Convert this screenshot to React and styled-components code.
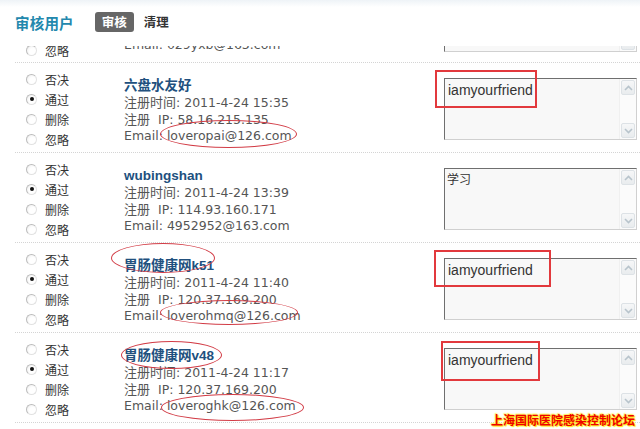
import React from 'react';
import styled, { createGlobalStyle } from 'styled-components';

const Global = createGlobalStyle`
  html, body {
    margin: 0;
    padding: 0;
    background: #fff;
    overflow: hidden;
  }
  body {
    font-family: "DejaVu Sans", "Noto Sans CJK SC", sans-serif;
  }
`;

// the list is scrolled: only the bottom of this entry is in view
const previous = { email: '029yxb@163.com' };

const users = [
  {
    name: '六盘水友好',
    time: '2011-4-24 15:35',
    ip: '58.16.215.135',
    email: 'loveropai@126.com',
    note: 'iamyourfriend',
    checked: 1,
    marks: {
      rect: { left: 420, top: 7, width: 102, height: 38 },
      ovals: [{ left: 145, top: 57, width: 137, height: 28 }],
    },
  },
  {
    name: 'wubingshan',
    time: '2011-4-24 13:39',
    ip: '114.93.160.171',
    email: '4952952@163.com',
    note: '学习',
    cjk: true,
    checked: 1,
  },
  {
    name: '胃肠健康网k51',
    time: '2011-4-24 11:40',
    ip: '120.37.169.200',
    email: 'loverohmq@126.com',
    note: 'iamyourfriend',
    checked: 1,
    marks: {
      rect: { left: 419, top: 7, width: 117, height: 37 },
      ovals: [
        { left: 96, top: 0, width: 104, height: 30 },
        { left: 145, top: 57, width: 138, height: 25 },
      ],
    },
  },
  {
    name: '胃肠健康网v48',
    time: '2011-4-24 11:17',
    ip: '120.37.169.200',
    email: 'loveroghk@126.com',
    note: 'iamyourfriend',
    checked: 1,
    marks: {
      rect: { left: 426, top: 8, width: 99, height: 40 },
      ovals: [
        { left: 106, top: 8, width: 101, height: 28 },
        { left: 146, top: 61, width: 143, height: 27 },
      ],
    },
  },
];

const actions = ['否决', '通过', '删除', '忽略'];

const Scroll = () => (
  <ScrollBar>
    <ScrollBtn>
      <svg width="9" height="6" viewBox="0 0 9 6">
        <path d="M1 5 L4.5 1.5 L8 5" fill="none" stroke="#b8c4cc" strokeWidth="1.6" />
      </svg>
    </ScrollBtn>
    <ScrollBtn>
      <svg width="9" height="6" viewBox="0 0 9 6">
        <path d="M1 1 L4.5 4.5 L8 1" fill="none" stroke="#b8c4cc" strokeWidth="1.6" />
      </svg>
    </ScrollBtn>
  </ScrollBar>
);

const App = () => (
  <Page>
    <Global />
    <Header>
      <Title>审核用户</Title>
      <Tab active>审核</Tab>
      <Tab>清理</Tab>
    </Header>
    <List>
      <Row tail>
        <Actions tail>
          <Choice>
            <Radio />
            忽略
          </Choice>
        </Actions>
        <Info tail>
          <Line>Email: {previous.email}</Line>
        </Info>
        <Memo tail>
          <MemoText />
          <Scroll />
        </Memo>
      </Row>
      {users.map((u, i) => (
        <Row key={i}>
          <Actions>
            {actions.map((a, j) => (
              <Choice key={a}>
                <Radio checked={j === u.checked} />
                {a}
              </Choice>
            ))}
          </Actions>
          <Info>
            <Name>{u.name}</Name>
            <Line>
              <Cjk>注册时间</Cjk>: {u.time}
            </Line>
            <Line>
              <Cjk>注册</Cjk>&nbsp; IP: {u.ip}
            </Line>
            <Line>Email: {u.email}</Line>
          </Info>
          <Memo>
            <MemoText cjk={u.cjk}>{u.note}</MemoText>
            <Scroll />
          </Memo>
          {u.marks && (
            <>
              <RedBox style={u.marks.rect} />
              {u.marks.ovals.map((o, k) => (
                <RedOval key={k} style={o} />
              ))}
            </>
          )}
        </Row>
      ))}
    </List>
    <Stamp>上海国际医院感染控制论坛</Stamp>
  </Page>
);

const Page = styled.div`
  position: relative;
  width: 640px;
  height: 429px;
  overflow: hidden;
  background: #fff;
`;

const Header = styled.div`
  height: 46px;
  display: flex;
  align-items: center;
  padding: 0 0 2px 15px;
  box-sizing: border-box;
  background: linear-gradient(#eef3f7 0px, #ffffff 7px);
  font-family: "Noto Sans CJK SC", sans-serif;
`;

const Title = styled.div`
  color: #2388ad;
  font-size: 14.5px;
  font-weight: 700;
  margin-right: 21px;
  letter-spacing: 0.2px;
`;

const Tab = styled.span`
  display: inline-block;
  font-size: 12.5px;
  font-weight: 700;
  line-height: 20px;
  padding: 0 7px;
  margin-right: 3px;
  border-radius: 3px;
  color: ${(p) => (p.active ? '#fff' : '#333')};
  background: ${(p) => (p.active ? '#666' : 'transparent')};
`;

const List = styled.div`
  height: 383px;
  overflow: hidden;
`;

const Row = styled.div`
  position: relative;
  margin-left: 15px;
  height: ${(p) => (p.tail ? '17px' : '90px')};
  overflow: ${(p) => (p.tail ? 'hidden' : 'visible')};
  box-sizing: border-box;
  border-bottom: 1px dotted #d4d4d4;
  display: grid;
  grid-template-columns: 109px 320px 193px;
  grid-template-rows: minmax(0, 1fr);
  align-items: ${(p) => (p.tail ? 'end' : 'start')};
`;

const Actions = styled.div`
  padding: ${(p) => (p.tail ? '0 0 2px 11px' : '6px 0 0 11px')};
  font-family: "Noto Sans CJK SC", sans-serif;
  font-size: 12px;
  color: #333;
`;

const Choice = styled.div`
  display: flex;
  align-items: center;
  height: 20px;
  gap: 8px;
`;

const Radio = styled.span`
  position: relative;
  width: 9px;
  height: 9px;
  border-radius: 50%;
  border: 1px solid #bcbcbc;
  border-right-color: #e2e2e2;
  border-bottom-color: #e2e2e2;
  background: radial-gradient(circle at 65% 65%, #ffffff 40%, #ececec 100%);
  &::after {
    content: '';
    display: ${(p) => (p.checked ? 'block' : 'none')};
    position: absolute;
    left: 2.5px;
    top: 2.5px;
    width: 4px;
    height: 4px;
    border-radius: 50%;
    background: #111;
  }
`;

const Info = styled.div`
  padding-top: ${(p) => (p.tail ? '0' : '14px')};
  margin-bottom: ${(p) => (p.tail ? '9px' : '0')};
  color: #555;
  font-size: 12.5px;
`;

const Name = styled.div`
  line-height: 17px;
  font-family: "Liberation Sans", "Noto Sans CJK SC", sans-serif;
  font-weight: 700;
  font-size: 13.5px;
  color: #21507e;
`;

const Line = styled.div`
  line-height: 16px;
  white-space: nowrap;
`;

const Cjk = styled.span`
  font-family: "Noto Sans CJK SC", sans-serif;
  font-size: 13px;
`;

const Memo = styled.div`
  margin-top: ${(p) => (p.tail ? '0' : '15px')};
  margin-bottom: ${(p) => (p.tail ? '10px' : '0')};
  height: 62px;
  box-sizing: border-box;
  border: 1px solid #d0d0d0;
  border-top-color: #6f6f6f;
  border-left-color: #6f6f6f;
  background: #f8f8f8;
  display: flex;
`;

const MemoText = styled.div`
  flex: 1;
  padding: ${(p) => (p.cjk ? '1px 2px' : '2px 3px')};
  font-family: ${(p) =>
    p.cjk ? '"Noto Sans CJK SC", sans-serif' : '"Liberation Sans", Arial, sans-serif'};
  font-size: ${(p) => (p.cjk ? '12px' : '14px')};
  line-height: 18px;
  color: #333;
`;

const ScrollBar = styled.div`
  width: 16px;
  display: flex;
  flex-direction: column;
  justify-content: space-between;
  background: #fbfbfb;
  border-left: 1px solid #f0f0f0;
`;

const ScrollBtn = styled.div`
  height: 15px;
  margin: 1px;
  box-sizing: border-box;
  border: 1px solid #dde2e6;
  border-radius: 2px;
  background: linear-gradient(#f6f7f8, #e9ecee);
  display: flex;
  align-items: center;
  justify-content: center;
`;

const RedBox = styled.div`
  position: absolute;
  box-sizing: border-box;
  border: 2px solid #e2393d;
  pointer-events: none;
`;

const RedOval = styled.div`
  position: absolute;
  box-sizing: border-box;
  border: 1.5px solid #d23c46;
  border-radius: 50%;
  pointer-events: none;
`;

const Stamp = styled.div`
  position: absolute;
  right: 5px;
  bottom: 1px;
  font-family: "Noto Sans CJK SC", sans-serif;
  font-size: 12px;
  font-weight: 700;
  line-height: 16px;
  color: #ee0000;
  text-shadow: 0 0 2px #ffe600, 1px 1px 1px #ffe600, -1px -1px 1px #fff27a;
`;

export default App;
